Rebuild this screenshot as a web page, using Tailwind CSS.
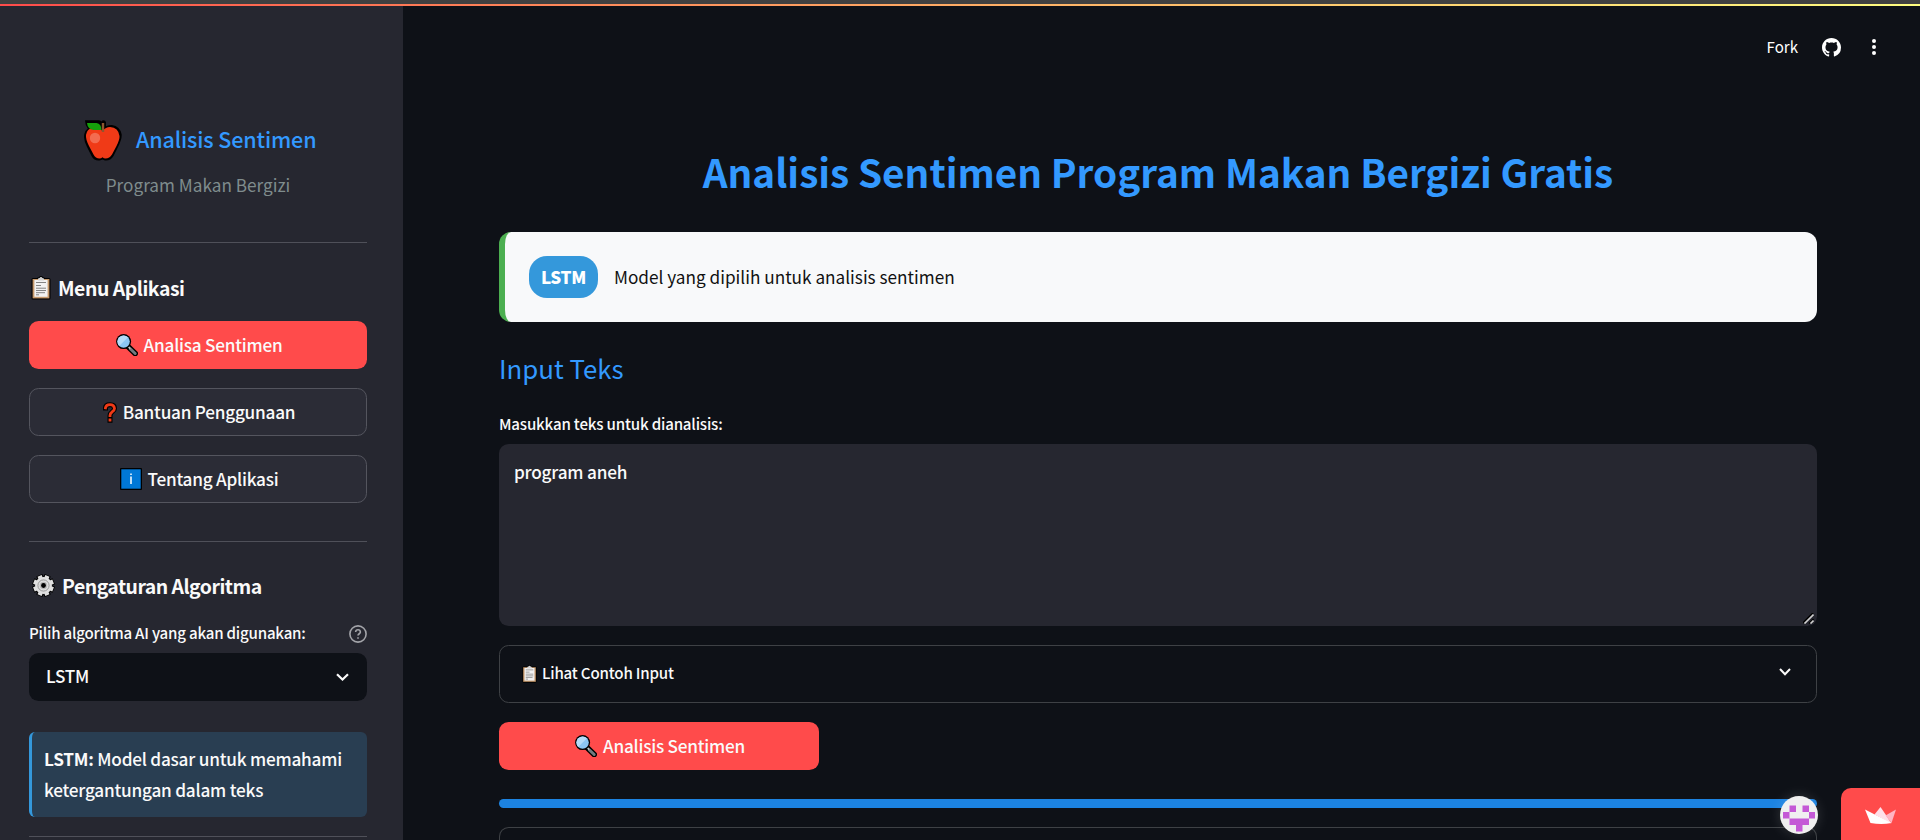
<!DOCTYPE html>
<html lang="id">
<head>
<meta charset="utf-8">
<title>Analisis Sentimen Program Makan Bergizi Gratis</title>
<script src="https://cdn.jsdelivr.net/npm/@tailwindcss/browser@4"></script>
</head>
<body class="relative h-[840px] w-[1920px] overflow-hidden bg-[#0e1117] font-['Noto_Sans_CJK_SC','Noto_Sans',sans-serif] text-[17.2px] text-[#fafafa]">
<svg width="0" height="0" class="absolute">
  <defs>
    <symbol id="clipboard" viewBox="0 0 20 24">
      <rect x="0.5" y="2" width="19" height="21.5" rx="1.5" fill="#000"/>
      <path d="M6 4V2.2Q6.3 1.4 8 1.3Q8.4 0 10 0T12 1.3Q13.700 1.400 14 2.200V4z" fill="#000"/>
      <rect x="1.600" y="3" width="16.800" height="19.400" fill="#c69a6d"/>
      <rect x="3.400" y="4" width="13.200" height="16.800" fill="#f2f2f2"/>
      <path d="M7 4.500V3q0-.8 1.600-.9Q9 1 10 1t1.400 1.100q1.600.1 1.600.9v1.500z" fill="#d2d2d2"/>
      <path d="M5 6.500h10M5 9.500h5M5 12.200h10M5 14.500h10M5 16.700h9M5 18.800h3" stroke="#777" stroke-width=".9"/>
    </symbol>
    <symbol id="magnifier" viewBox="0 0 22 22">
      <path d="M11.500 12l7.700 7.500" stroke="#000" stroke-width="5.600" stroke-linecap="round"/>
      <path d="M14.500 15l4.700 4.500" stroke="#717b7f" stroke-width="3" stroke-linecap="round"/>
      <path d="M12 12.300l2.300 2.300" stroke="#b9c0c3" stroke-width="1.800"/>
      <circle cx="7.600" cy="7.600" r="7.500" fill="#000"/>
      <circle cx="7.600" cy="7.600" r="6.200" fill="#8cc6f4"/>
      <path d="M3.200 12L12 3.200A6.200 6.200 0 0 0 3.200 12z" fill="#b5dbf8"/>
    </symbol>
  </defs>
</svg>
<div class="h-1 bg-[#404040]"></div>
<div class="h-0.5 bg-linear-to-r from-[#ff4b4b] to-[#fffd80]"></div>
<div class="flex h-[834px]">
  <aside class="flex w-[403px] shrink-0 flex-col bg-[#262730] pr-9 pl-[29px] font-medium whitespace-nowrap">
    <div class="mt-[113px] flex h-[42px] items-center pl-[55px]">
      <svg class="h-[41px] w-[38px] shrink-0" viewBox="0 0 38 41">
        <path d="M1 .3h14q2 .2 2.500 1.200Q18 .2 19.500.2q2 0 2.500 2v4Q25 4.800 28 5q8 1 9.700 9.500Q38 19 34 27l-4.500 9q-3 5-8.500 4.500-1.500-.3-2.500-1-1 .7-3 1Q10 41 7.500 36L3 27Q-1 19 .3 14 1.500 10 3.800 8.500 1 5 1 .3z" fill="#000"/>
        <path d="M19 10.500Q21.500 7 26 7q8.500.7 9.500 9 .3 3.500-3 10L28 34.500q-2.500 4-6.500 4-1.700 0-3-1.300-1.300 1.300-3 1.300-4 0-6-4L5 26Q1.500 19 2 15 3 9 8 8z" fill="#f03a17"/>
        <path d="M3 3h9.500q5 1 5 7H9.500Q3.500 9 3 3z" fill="#16a10b"/>
        <path d="M19 3v9" stroke="#8e562e" stroke-width="2.400"/>
        <circle cx="11" cy="18" r="5.200" fill="#f36b50"/>
      </svg>
      <span class="ml-3.5 pb-px text-[21.5px] tracking-[-0.006em] text-[#3399ff]">Analisis Sentimen</span>
    </div>
    <div class="mt-[9px] h-[29px] text-center leading-[29px] font-normal text-[#7f8c8d]">Program Makan Bergizi</div>
    <hr class="mt-[43px] border-[#4f5059]">
    <div class="mt-[30px] flex h-[30px] items-center pl-0.5 text-[19.4px] font-bold tracking-[-0.45px]">
      <svg class="h-6 w-5"><use href="#clipboard"/></svg><span class="ml-[7px]">Menu Aplikasi</span>
    </div>
    <div class="mt-[18px] flex h-12 items-center justify-center rounded-[9.6px] bg-[#ff4b4b] pl-0.5">
      <svg class="size-[22px]"><use href="#magnifier"/></svg><span class="ml-1.5 tracking-[-0.014em]">Analisa Sentimen</span>
    </div>
    <div class="mt-[19px] flex h-12 items-center justify-center rounded-[9.6px] border border-[#54555e] bg-[#2b2c36] pl-0.5">
      <svg class="h-[21px] w-3.5" viewBox="0 0 14 21"><g fill="none" stroke-linecap="square"><path d="M2.500 6Q2.500 2.700 7 2.700t4.500 3.700c0 3.300-4.500 3.300-4.500 7.300M7 18v.2" stroke="#000" stroke-width="5"/><path d="M2.500 5.800Q3 2.700 7 2.700t4.500 3.700c0 3.300-4.500 3.300-4.500 7.100M7 18v.2" stroke="#f03a17" stroke-width="2.800"/></g></svg>
      <span class="ml-1.5 tracking-[-0.014em]">Bantuan Penggunaan</span>
    </div>
    <div class="mt-[19px] flex h-12 items-center justify-center rounded-[9.6px] border border-[#54555e] bg-[#2b2c36] pl-0.5">
      <svg class="size-[22px]" viewBox="0 0 22 22"><rect width="22" height="22" rx="1" fill="#000"/><rect x="1.300" y="1.300" width="19.400" height="19.400" fill="#0078d7"/><path d="M11 8.500v7.500M11 5.500v1.500" stroke="#fff" stroke-width="1.500"/></svg>
      <span class="ml-1.5 tracking-[-0.014em]">Tentang Aplikasi</span>
    </div>
    <hr class="mt-[38px] border-[#4f5059]">
    <div class="mt-[29px] flex h-[30px] items-center pl-[3px] text-[19.4px] font-bold tracking-[-0.5px]">
      <svg class="mb-px size-[23px]" viewBox="-11.500 -11.500 23 23"><circle r="8.700" fill="#000"/><g stroke="#000" stroke-width="6.600"><path d="M-4.200-10.300L4.200 10.300M4.200-10.300L-4.200 10.300M-10.300-4.200L10.300 4.200M-10.300 4.200L10.300-4.200"/></g><circle r="8.400" fill="#e0e0e0"/><g stroke="#e0e0e0" stroke-width="4.400"><path d="M-3.900-9.600L3.900 9.600M3.900-9.600L-3.900 9.600M-9.600-3.900L9.600 3.900M-9.600 3.900L9.600-3.900"/></g><circle r="5.600" fill="none" stroke="#888" stroke-width=".8"/><circle r="3.800" fill="#bbb"/><circle r="2.400" fill="#000"/></svg>
      <span class="ml-[7px]">Pengaturan Algoritma</span>
    </div>
    <div class="mt-[21px] flex h-6 items-center justify-between text-[15.1px]">
      <span class="pb-[3px] tracking-[-0.014em]">Pilih algoritma AI yang akan digunakan:</span>
      <svg class="mb-px size-[18px]" viewBox="0 0 18 18" fill="none" stroke="#a3a4a9" stroke-width="1.600"><circle cx="9" cy="9" r="8.100"/><path d="M6.600 7q.2-2.200 2.400-2.200T11.400 7c0 1.700-2.400 1.800-2.400 3.600M9 12.300v1.500"/></svg>
    </div>
    <div class="mt-[7px] flex h-12 items-center justify-between rounded-[9.6px] bg-[#0e1117] pr-[18px] pl-[17px]">
      <span class="pb-0.5 tracking-[-0.014em]">LSTM</span>
      <svg class="h-2 w-[13px]" viewBox="0 0 13 8" fill="none" stroke="#fafafa" stroke-width="2.200"><path d="M1 1.200l5.500 5.300L12 1.200"/></svg>
    </div>
    <div class="mt-[31px] h-[85px] rounded-md border-l-[3px] border-[#3498db] bg-[#293e52] pt-[11px] pl-3 leading-[31px] tracking-[-0.013em]"><b>LSTM:</b> Model dasar untuk memahami<br>ketergantungan dalam teks</div>
    <hr class="mt-[19px] border-[#4f5059]">
  </aside>
  <main class="flex w-[1517px] flex-col pr-[103px] pl-24 font-medium whitespace-nowrap">
    <header class="-mr-[103px] flex h-[82px] shrink-0 items-center justify-end pr-11 text-[15.1px] font-normal text-white">
      <span class="pb-px">Fork</span>
      <svg class="ml-6 size-[19px]" viewBox="0 0 16 16" fill="#fff"><path d="M8 0C3.580 0 0 3.580 0 8c0 3.540 2.290 6.530 5.470 7.590.4.070.55-.17.55-.38 0-.19-.01-.82-.01-1.490-2.010.37-2.530-.49-2.690-.94-.09-.23-.48-.94-.82-1.130-.28-.15-.68-.52-.01-.53.63-.01 1.080.58 1.230.82.72 1.210 1.870.87 2.330.66.07-.52.28-.87.51-1.070-1.780-.2-3.640-.89-3.640-3.950 0-.87.31-1.590.82-2.150-.08-.2-.36-1.020.08-2.120 0 0 .67-.21 2.200.82.640-.18 1.320-.27 2-.27s1.360.09 2 .27c1.530-1.040 2.200-.82 2.200-.82.440 1.100.16 1.920.08 2.120.510.56.820 1.270.820 2.150 0 3.070-1.870 3.750-3.650 3.950.29.25.54.73.54 1.480 0 1.070-.01 1.930-.01 2.200 0 .21.15.46.55.38A8 8 0 0 0 16 8c0-4.420-3.580-8-8-8z"/></svg>
      <svg class="ml-[31px] h-4 w-1" viewBox="0 0 4 16" fill="#fff"><circle cx="2" cy="2" r="2"/><circle cx="2" cy="8" r="2"/><circle cx="2" cy="14" r="2"/></svg>
    </header>
    <h1 class="mt-[58px] h-[51px] shrink-0 text-center text-[38.700px] leading-[50px] font-bold text-[#3399ff]">Analisis Sentimen Program Makan Bergizi Gratis</h1>
    <section class="mt-[35px] flex h-[90px] shrink-0 items-center rounded-xl border-l-[6px] border-[#4caf50] bg-[#f8f9fa] pl-6 text-[#111]">
      <span class="flex h-[42px] w-[69px] items-center justify-center rounded-[18px] bg-[#3498db] font-black tracking-[-0.02em] text-white">LSTM</span>
      <span class="ml-4 font-normal">Model yang dipilih untuk analisis sentimen</span>
    </section>
    <h2 class="mt-[26px] h-10 text-[25.800px] leading-10 font-normal text-[#3399ff]">Input Teks</h2>
    <label class="mt-[23px] h-6 text-[15.1px] leading-6 tracking-[-0.012em]">Masukkan teks untuk dianalisis:</label>
    <div class="mt-[9px] flex h-[182px] shrink-0 items-end justify-between rounded-[9.6px] bg-[#262730] pr-[3px] pl-[15px]">
      <span class="self-start pt-[15px] tracking-[-0.012em]">program aneh</span>
      <svg class="mb-0.5 h-[11px] w-[11px]" viewBox="0 0 11 11" stroke-width="1.600"><path d="M0 10L10 0M6 10.500L10.500 6" stroke="#000"/><path d="M1.500 10.500L10.500 1.500M7.500 10.500l3-3" stroke="#d0d0d0"/></svg>
    </div>
    <div class="mt-[19px] flex h-[58px] shrink-0 items-center rounded-[9.6px] border border-[#3e4145] pr-[25px] pl-[22px] text-[15.1px]">
      <svg class="h-[18px] w-[15px]"><use href="#clipboard"/></svg>
      <span class="ml-[5px] pb-[3px] tracking-[-0.012em]">Lihat Contoh Input</span>
      <svg class="mb-1 ml-auto h-2 w-3" viewBox="0 0 12 8" fill="none" stroke="#fafafa" stroke-width="2"><path d="M1 1l5 5.200L11 1"/></svg>
    </div>
    <div class="mt-[19px] flex h-12 w-80 shrink-0 items-center justify-center rounded-[9.6px] bg-[#ff4b4b] pl-0.5">
      <svg class="size-[22px]"><use href="#magnifier"/></svg><span class="ml-1.5 tracking-[-0.014em]">Analisis Sentimen</span>
    </div>
    <div class="mt-[29px] h-[9px] shrink-0 rounded-full bg-[#1c83e1]"></div>
    <div class="mt-[19px] h-[13px] shrink-0 rounded-t-[9.6px] border border-b-0 border-[#3e4145]"></div>
  </main>
</div>
<div class="absolute top-[796px] left-[1780px] size-[38px] overflow-hidden rounded-full bg-[#f0f0f0] shadow-[0_0_14px_rgba(255,255,255,0.15)]">
  <svg class="size-full" viewBox="0 0 38 38" fill="#c459d6"><path d="M9.500 9.500h6.500V16H9.500zM22.500 9.500H29V16h-6.500zM3 16h6.500v6.500H3zM29 16h6v6.500H29zM9.500 22.500H29V29h-6.500v6.500H16V29H9.500z"/></svg>
</div>
<div class="absolute top-[788px] left-[1841px] h-[52px] w-[79px] rounded-tl-[10px] bg-[#ff4b4b]">
  <svg class="mt-[19px] ml-6 h-[17px] w-[31px]" viewBox="0 0 31 17"><path d="M9.500 7.500L15.500 0l5.800 8.500 5 8z" fill="#ffe0ea"/><path d="M20.500 8.500L31 2.500 26.500 16z" fill="#ffb5c4"/><path d="M0 2.500L26.500 16q-10 2-21 0z" fill="#fff"/></svg>
</div>
</body>
</html>
